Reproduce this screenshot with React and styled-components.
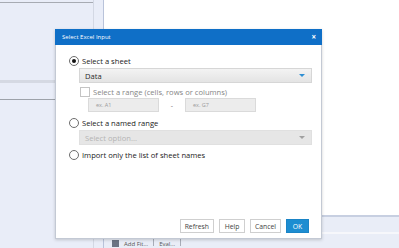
import React from "react";
import styled, { createGlobalStyle } from "styled-components";

const GlobalStyle = createGlobalStyle`
  html, body {
    margin: 0;
    padding: 0;
    width: 399px;
    height: 248px;
    overflow: hidden;
    font-family: "Open Sans", "Noto Sans", sans-serif;
  }
`;

export default function App() {
  return (
    <>
      <GlobalStyle />
      <Page>
        <LeftPane>
          <InnerPane>
            <TopStrip />
            <PaneSection $h={77} />
            <PaneBand />
            <PaneSection $h={16} />
            <PaneRule />
          </InnerPane>
        </LeftPane>
        <Main>
          <Workspace />
          <StatusArea>
            <StatusLine />
            <Toolbar>
              <Grip />
              <ToolIcon />
              <ToolText>Add Fit...</ToolText>
              <ToolSep />
              <ToolText>Eval...</ToolText>
              <ToolSep />
            </Toolbar>
          </StatusArea>
        </Main>

        <Dialog>
          <TitleBar>
            <Title>Select Excel Input</Title>
            <Close>×</Close>
          </TitleBar>
          <Body>
            <OptionRow>
              <Radio $checked />
              <Label>Select a sheet</Label>
            </OptionRow>
            <SelectBox>
              <span>Data</span>
              <Caret $color="#2f8fd3" />
            </SelectBox>

            <CheckRow>
              <Check />
              <Label $muted>Select a range (cells, rows or columns)</Label>
            </CheckRow>
            <RangeRow>
              <RangeInput>ex. A1</RangeInput>
              <Dash>-</Dash>
              <RangeInput>ex. G7</RangeInput>
            </RangeRow>

            <OptionRow $top={5}>
              <Radio />
              <Label>Select a named range</Label>
            </OptionRow>
            <SelectBox $disabled>
              <span>Select option...</span>
              <Caret $color="#a0a0a0" />
            </SelectBox>

            <OptionRow $top={4}>
              <Radio />
              <Label>Import only the list of sheet names</Label>
            </OptionRow>

            <Footer>
              <Button>Refresh</Button>
              <Button>Help</Button>
              <Button>Cancel</Button>
              <Button $primary>OK</Button>
            </Footer>
          </Body>
        </Dialog>
      </Page>
    </>
  );
}

const Page = styled.div`
position: relative;
width: 399px;
height: 248px;
display: flex;
background: #ffffff;
overflow: hidden;
`;

const LeftPane = styled.div`
width: 103px;
height: 100%;
background: #e9edf8;
border-right: 1px solid #b9c3da;
flex-shrink: 0;
`;

const InnerPane = styled.div`
width: 93px;
height: 100%;
border-right: 1px solid #d3d8e4;
display: flex;
flex-direction: column;
`;

const TopStrip = styled.div`
height: 2px;
border-bottom: 1px solid #a7abb3;
`;

const PaneSection = styled.div`
height: ${(p) => p.$h}px;
`;

const PaneBand = styled.div`
height: 3px;
background: #d5d9e3;
`;

const PaneRule = styled.div`
height: 1px;
background: #9da2aa;
`;

const Main = styled.div`
flex: 1;
display: flex;
flex-direction: column;
`;

const Workspace = styled.div`
height: 220px;
background: #ffffff;
border-bottom: 2px solid #c7cfe1;
`;

const StatusArea = styled.div`
flex: 1;
background: #e9edf7;
display: flex;
flex-direction: column;
padding-top: 15px;
`;

const StatusLine = styled.div`
height: 2px;
background: #f6f7fb;
`;

const Toolbar = styled.div`
display: flex;
align-items: flex-start;
gap: 5px;
padding: 2px 0 0 4px;
height: 12px;
`;

const Grip = styled.div`
width: 8px;
height: 1px;
border-top: 1px dotted #8a8f99;
`;

const ToolIcon = styled.div`
width: 7px;
height: 7px;
margin-top: 4px;
margin-left: -9px;
background: #6c7484;
`;

const ToolText = styled.span`
font-size: 6px;
line-height: 6px;
margin-top: 5px;
color: #555;
`;

const ToolSep = styled.div`
width: 1px;
height: 10px;
background: #a8adb8;
`;

const Dialog = styled.div`
position: absolute;
left: 55px;
top: 29px;
width: 267px;
height: 210px;
background: #ffffff;
border: 1px solid #c3c9d4;
border-top: none;
box-sizing: border-box;
box-shadow: 0 1px 3px rgba(0, 0, 0, 0.18);
display: flex;
flex-direction: column;
`;

const TitleBar = styled.div`
height: 16px;
margin: 0 -1px;
background: #0f6fc7;
display: flex;
align-items: center;
justify-content: space-between;
padding: 0 6px 0 7px;
`;

const Title = styled.span`
color: #ffffff;
font-size: 6px;
`;

const Close = styled.span`
color: #ffffff;
font-size: 8px;
font-weight: 700;
line-height: 8px;
`;

const Body = styled.div`
flex: 1;
display: flex;
flex-direction: column;
padding: 10px 9px 5px 13px;
`;

const OptionRow = styled.div`
display: flex;
align-items: center;
gap: 3px;
height: 12px;
margin-top: ${(p) => p.$top || 0}px;
`;

const Radio = styled.span`
width: 8px;
height: 8px;
border-radius: 50%;
border: 1px solid #6d6d6d;
background: #fff;
display: flex;
align-items: center;
justify-content: center;
&::after {
  content: "";
  width: 4px;
  height: 4px;
  border-radius: 50%;
  background: ${(p) => (p.$checked ? "#111" : "transparent")};
}
`;

const Label = styled.span`
font-size: 7.6px;
color: ${(p) => (p.$muted ? "#858585" : "#1a1a1a")};
white-space: nowrap;
`;

const SelectBox = styled.div`
margin: 1px 0 0 10px;
height: 15px;
box-sizing: border-box;
border: 1px solid ${(p) => (p.$disabled ? "#e0e0e0" : "#d6d6d6")};
background: ${(p) =>
  p.$disabled ? "#e6e6e6" : "linear-gradient(#f3f3f3, #e4e4e4)"};
display: flex;
align-items: center;
justify-content: space-between;
padding: 0 6px 0 5px;
font-size: 7.6px;
color: ${(p) => (p.$disabled ? "#b4b4b4" : "#2a2a2a")};
`;

const Caret = styled.span`
width: 0;
height: 0;
border-left: 3px solid transparent;
border-right: 3px solid transparent;
border-top: 3px solid ${(p) => p.$color};
`;

const CheckRow = styled.div`
display: flex;
align-items: center;
gap: 3px;
height: 10px;
margin: 4px 0 0 11px;
`;

const Check = styled.span`
width: 8px;
height: 8px;
border: 1px solid #c4c4c4;
background: #fff;
`;

const RangeRow = styled.div`
display: flex;
align-items: center;
margin: 1px 0 0 19px;
`;

const RangeInput = styled.div`
width: 71px;
height: 14px;
box-sizing: border-box;
border: 1px solid #dadada;
background: #ececec;
font-size: 5.5px;
color: #9a9a9a;
display: flex;
align-items: center;
padding-left: 7px;
`;

const Dash = styled.span`
width: 26px;
text-align: center;
font-size: 7px;
color: #777;
`;

const Footer = styled.div`
margin-top: auto;
display: flex;
justify-content: flex-end;
gap: 5px;
padding-right: 3px;
`;

const Button = styled.div`
height: 14px;
box-sizing: border-box;
padding: 0 4px;
border: 1px solid ${(p) => (p.$primary ? "#1a84c6" : "#cfcfcf")};
background: ${(p) => (p.$primary ? "#1d8dd1" : "#ffffff")};
color: ${(p) => (p.$primary ? "#ffffff" : "#444")};
font-size: 6.8px;
display: flex;
align-items: center;
justify-content: center;
min-width: ${(p) => (p.$primary ? 23 : 26)}px;
`;
